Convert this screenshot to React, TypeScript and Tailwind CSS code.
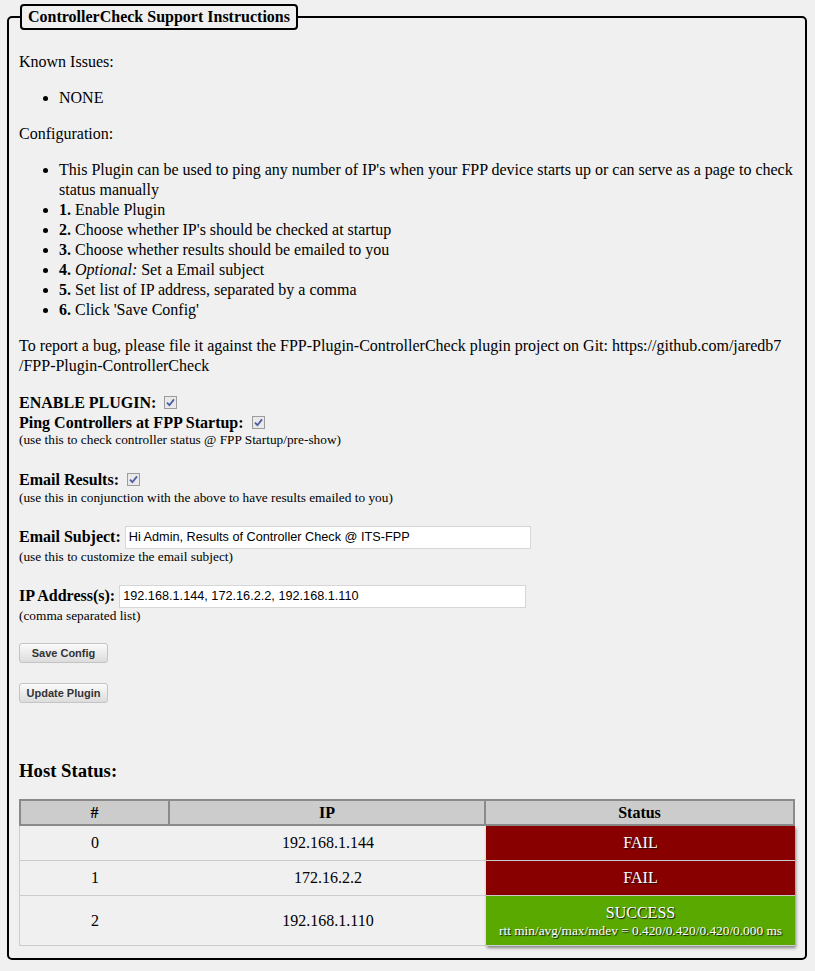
import React from 'react';

interface HostRow {
  id: number;
  ip: string;
  ok: boolean;
  detail?: string;
}

const hosts: HostRow[] = [
  { id: 0, ip: '192.168.1.144', ok: false },
  { id: 1, ip: '172.16.2.2', ok: false },
  { id: 2, ip: '192.168.1.110', ok: true, detail: 'rtt min/avg/max/mdev = 0.420/0.420/0.420/0.000 ms' },
];

function CheckBox() {
  return (
    <svg width="13" height="13" viewBox="0 0 13 13" className="inline-block ml-[8px] align-[-1px]">
      <rect x="0.5" y="0.5" width="12" height="12" fill="#e9e9e9" stroke="#9c9c9c" />
      <path d="M3 6.6 L5.4 9.2 L10 3.4" stroke="#4b5ca6" strokeWidth="1.8" fill="none" />
    </svg>
  );
}

function Button({ label }: { label: string }) {
  return (
    <button
      type="button"
      className="block w-[89px] h-[20px] rounded-[3px] border border-[#c4c4c4] bg-gradient-to-b from-[#fbfbfb] to-[#dcdcdc] text-[11px] font-bold text-[#333] leading-[18px] font-['Liberation_Sans',sans-serif]"
    >
      {label}
    </button>
  );
}

export default function App() {
  return (
    <div className="min-h-[971px] bg-[#f0f0f0] text-black text-[16px] font-['Liberation_Serif',serif] pt-[4px]">
      <fieldset className="ml-[7px] w-[800px] border-2 border-black rounded-[5px] px-[10px] pt-[22px] pb-[12px]">
        <legend className="ml-px border-2 border-black rounded-[4px] px-[6px] py-[2px] font-bold leading-[18px]">
          ControllerCheck Support Instructions
        </legend>

        <div className="leading-5">Known Issues:</div>
        <ul className="list-disc pl-10 mt-4 leading-5">
          <li>NONE</li>
        </ul>

        <div className="mt-4 leading-5">Configuration:</div>
        <ul className="list-disc pl-10 mt-4 leading-5">
          <li>This Plugin can be used to ping any number of IP's when your FPP device starts up or can serve as a page to check status manually</li>
          <li><b>1.</b> Enable Plugin</li>
          <li><b>2.</b> Choose whether IP's should be checked at startup</li>
          <li><b>3.</b> Choose whether results should be emailed to you</li>
          <li><b>4.</b> <i>Optional:</i> Set a Email subject</li>
          <li><b>5.</b> Set list of IP address, separated by a comma</li>
          <li><b>6.</b> Click 'Save Config'</li>
        </ul>

        <div className="mt-4 leading-5">
          To report a bug, please file it against the FPP-Plugin-ControllerCheck plugin project on Git: https://github.com/jaredb7
          <br />
          /FPP-Plugin-ControllerCheck
        </div>

        <div className="mt-[17px] leading-5 font-bold">
          ENABLE PLUGIN:<CheckBox />
        </div>
        <div className="leading-5 font-bold">
          Ping Controllers at FPP Startup:<CheckBox />
        </div>
        <div className="text-[13.33px] leading-4 -mt-px">(use this to check controller status @ FPP Startup/pre-show)</div>

        <div className="mt-[22px] leading-5 font-bold">
          Email Results:<CheckBox />
        </div>
        <div className="text-[13.33px] leading-4">(use this in conjunction with the above to have results emailed to you)</div>

        <div className="mt-[18px] flex items-center h-[26px]">
          <span className="font-bold">Email Subject:</span>
          <input
            readOnly
            value="Hi Admin, Results of Controller Check @ ITS-FPP"
            className="ml-[4px] w-[406px] h-[23px] bg-white border border-[#d6d6d6] px-[3px] text-[12.7px] text-black font-['Liberation_Sans',sans-serif] outline-none"
          />
        </div>
        <div className="text-[13.33px] leading-4 -mt-px">(use this to customize the email subject)</div>

        <div className="mt-[18px] flex items-center h-[26px]">
          <span className="font-bold">IP Address(s):</span>
          <input
            readOnly
            value="192.168.1.144, 172.16.2.2, 192.168.1.110"
            className="ml-[4px] w-[407px] h-[23px] bg-white border border-[#d6d6d6] px-[3px] text-[12.7px] text-black font-['Liberation_Sans',sans-serif] outline-none"
          />
        </div>
        <div className="text-[13.33px] leading-4 -mt-px">(comma separated list)</div>

        <div className="mt-[19px]">
          <Button label="Save Config" />
        </div>
        <div className="mt-[20px]">
          <Button label="Update Plugin" />
        </div>

        <h3 className="mt-[57px] text-[18.7px] font-bold leading-[22px]">Host Status:</h3>

        <table className="mt-[17px] w-[776px] table-fixed border-separate border-spacing-0 text-center">
          <colgroup>
            <col className="w-[151px]" />
            <col className="w-[316px]" />
            <col className="w-[309px]" />
          </colgroup>
          <thead>
            <tr className="bg-[#cccccc]">
              <th className="border-2 border-[#8a8a8a] leading-[21px] py-px font-bold">#</th>
              <th className="border-y-2 border-r-2 border-[#8a8a8a] leading-[21px] py-px font-bold">IP</th>
              <th className="border-y-2 border-r-2 border-[#8a8a8a] leading-[21px] py-px font-bold">Status</th>
            </tr>
          </thead>
          <tbody>
            {hosts.map((h) => (
              <tr key={h.id}>
                <td className="border-l border-b border-[#cccccc] py-[7px] leading-5">{h.id}</td>
                <td className="border-b border-[#cccccc] py-[7px] leading-5">{h.ip}</td>
                <td
                  className={`border-b border-[#cfcfcf] py-[7px] leading-5 text-white [text-shadow:1px_1px_1px_#111] shadow-[1px_2px_3px_rgba(0,0,0,0.45)] ${
                    h.ok ? 'bg-[#59a900]' : 'bg-[#880000]'
                  }`}
                >
                  <div>{h.ok ? 'SUCCESS' : 'FAIL'}</div>
                  {h.detail && <div className="text-[13.33px] leading-[15px]">{h.detail}</div>}
                </td>
              </tr>
            ))}
          </tbody>
        </table>
      </fieldset>
    </div>
  );
}
